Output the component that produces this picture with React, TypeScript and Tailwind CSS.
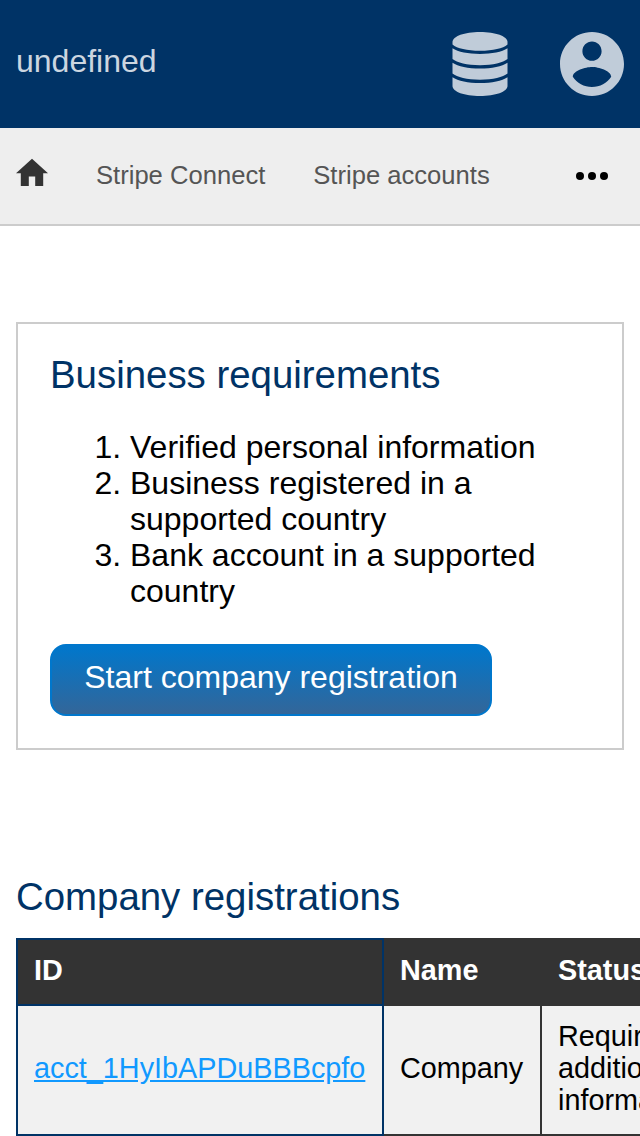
const requirements = [
  'Verified personal information',
  'Business registered in a supported country',
  'Bank account in a supported country',
];

function DatabaseIcon() {
  return (
    <svg className="h-16 w-14" viewBox="0 0 56 64" fill="#c0ccd9">
      <path d="M28 0C43.500 0 55.500 4.300 55.500 10V12.500C51 16.400 41 18.800 28 18.800S5 16.400 .500 12.500V10C.500 4.300 12.500 0 28 0Z" />
      <path d="M.500 16.300C6 19.900 16 22 28 22S50 19.900 55.500 16.300V27C51 30.700 41 33.200 28 33.200S5 30.700 .500 27Z" />
      <path d="M.500 30.700C6 34.400 16 36.500 28 36.500S50 34.400 55.500 30.700V41.500C51 45.200 41 47.700 28 47.700S5 45.200 .500 41.500Z" />
      <path d="M.500 45.200C6 48.800 16 51 28 51S50 48.800 55.500 45.200V54C55.500 59.700 43.500 64 28 64S.500 59.700 .500 54Z" />
    </svg>
  );
}

function AccountIcon() {
  return (
    <svg className="size-16" viewBox="2 2 20 20" fill="#c0ccd9">
      <path d="M12 2C6.480 2 2 6.480 2 12s4.480 10 10 10 10-4.480 10-10S17.520 2 12 2zm0 3c1.660 0 3 1.340 3 3s-1.340 3-3 3-3-1.340-3-3 1.340-3 3-3zm0 14.200c-2.500 0-4.710-1.280-6-3.220.030-1.990 4-3.080 6-3.080 1.990 0 5.970 1.090 6 3.080-1.290 1.940-3.500 3.220-6 3.220z" />
    </svg>
  );
}

export default function App() {
  return (
    <div className="h-[1136px] w-full overflow-hidden bg-white font-['Liberation_Sans',Arial,sans-serif] text-[32px] leading-9 text-black">
      <header className="flex h-32 items-center justify-between bg-[#003366] px-4">
        <span className="pb-1.5 text-[#ccd6e0]">undefined</span>
        <div className="flex gap-[52px]">
          <DatabaseIcon />
          <AccountIcon />
        </div>
      </header>
      <nav className="flex h-[98px] items-center border-b-2 border-[#cccccc] bg-[#eeeeee] pr-8 pl-4 text-[25.6px] leading-8 text-[#555555]">
        <svg className="mb-2 h-7 w-8" viewBox="2 2.500 20 17.500" fill="#333333">
          <path d="M10 20v-6h4v6h5v-8h3L12 3 2 12h3v8z" />
        </svg>
        <span className="ml-12 pb-0.5">Stripe Connect</span>
        <span className="ml-12 pb-0.5">Stripe accounts</span>
        <svg className="ml-auto h-2 w-8" viewBox="0 0 32 8" fill="#000000">
          <circle cx="4" cy="4" r="4" />
          <circle cx="16" cy="4" r="4" />
          <circle cx="28" cy="4" r="4" />
        </svg>
      </nav>
      <main className="px-4 pt-24">
        <section className="h-[428px] border-2 border-[#cccccc] px-8 pt-[29px]">
          <h2 className="text-[38.4px] leading-[44px] text-[#003366]">Business requirements</h2>
          <ol className="mt-8 list-decimal pl-20">
            {requirements.map((item) => (
              <li key={item}>{item}</li>
            ))}
          </ol>
          <button className="mt-[35px] flex h-[72px] w-[442px] items-center justify-center rounded-2xl border-2 border-[#0077cc] bg-[linear-gradient(#0077cc,#336699)] pb-1.5 text-white">
            Start company registration
          </button>
        </section>
        <h2 className="mt-[125px] text-[38.4px] leading-[44px] text-[#003366]">Company registrations</h2>
        <table className="mt-[19px] w-[724px] table-fixed border-collapse text-[28.8px] leading-8">
          <colgroup>
            <col className="w-[366px]" />
            <col className="w-[158px]" />
            <col className="w-[200px]" />
          </colgroup>
          <thead>
            <tr className="h-[66px] bg-[#333333] text-left text-white">
              <th className="border-2 border-[#003366] px-4 pb-1">ID</th>
              <th className="border-2 border-[#333333] px-4 pb-1">Name</th>
              <th className="border-2 border-[#333333] px-4 pb-1">Status</th>
            </tr>
          </thead>
          <tbody>
            <tr className="h-[130px] bg-[#f1f1f1]">
              <td className="border-2 border-[#003366] px-4 pb-1">
                <a className="text-[#1199ff] underline">acct_1HyIbAPDuBBBcpfo</a>
              </td>
              <td className="border-2 border-[#333333] px-4 pb-1">Company</td>
              <td className="border-2 border-[#333333] px-4 pb-1">Requires additional information</td>
            </tr>
          </tbody>
        </table>
      </main>
    </div>
  );
}
